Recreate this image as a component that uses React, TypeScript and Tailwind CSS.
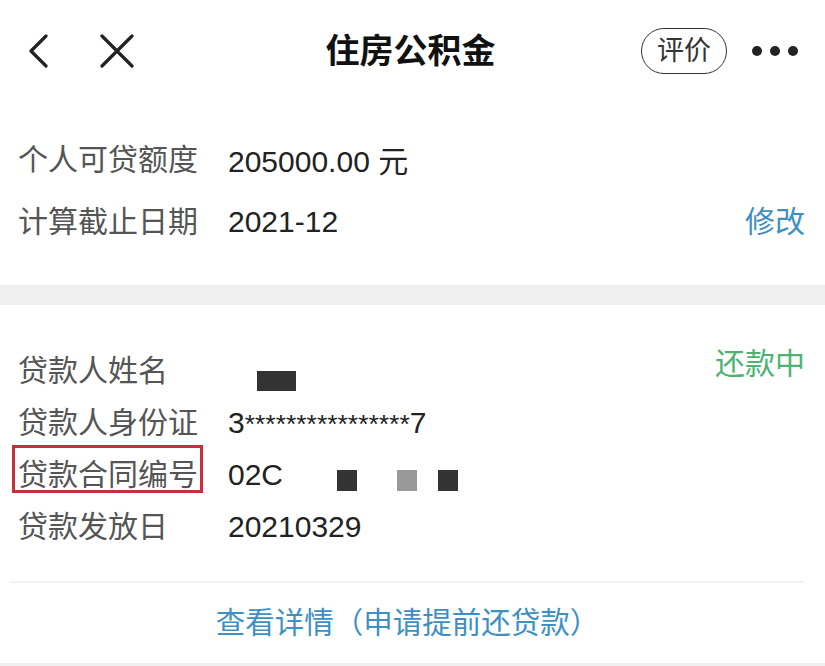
import React from "react";

const font = { fontFamily: '"Liberation Sans", "Noto Sans CJK SC", sans-serif' };

function Row({ label, children, right, labelBox }: { label: string; children?: React.ReactNode; right?: React.ReactNode; labelBox?: boolean }) {
  return (
    <div className="flex h-[52px] items-center pl-[18px] pr-[20px]">
      <div className="relative w-[210px] shrink-0 text-[30px] leading-[36px] text-[#555]">
        {labelBox && (
          <div className="absolute left-[-6px] top-[-12px] h-[48px] w-[191px] border-[3px] border-[#c4303b]" />
        )}
        {label}
      </div>
      <div className="flex flex-1 items-center text-[30px] leading-[36px] text-[#222]">{children}</div>
      {right}
    </div>
  );
}

export default function App() {
  return (
    <div className="flex min-h-[666px] w-[825px] flex-col bg-white" style={font}>
      {/* Header */}
      <div className="relative flex h-[102px] items-center px-[27px]">
        <svg width="22" height="34" viewBox="0 0 22 34" className="shrink-0">
          <path d="M19 2 L4 17 L19 32" fill="none" stroke="#222" strokeWidth="3.2" strokeLinecap="round" strokeLinejoin="round" />
        </svg>
        <svg width="36" height="34" viewBox="0 0 36 34" className="ml-[50px] shrink-0">
          <path d="M3 2 L33 32 M33 2 L3 32" fill="none" stroke="#222" strokeWidth="3.2" strokeLinecap="round" />
        </svg>
        <div className="pointer-events-none absolute left-0 right-0 top-0 flex h-[102px] items-center justify-center">
          <span className="ml-[-4px] text-[34px] font-bold text-[#111]">住房公积金</span>
        </div>
        <div className="ml-auto flex items-center">
          <div className="flex h-[46px] w-[86px] items-center justify-center rounded-full border-[1.5px] border-[#333] text-[27px] text-[#333]">
            评价
          </div>
          <div className="ml-[25px] flex items-center gap-[8px]">
            <span className="h-[10px] w-[10px] rounded-full bg-[#222]" />
            <span className="h-[10px] w-[10px] rounded-full bg-[#222]" />
            <span className="h-[10px] w-[10px] rounded-full bg-[#222]" />
          </div>
        </div>
      </div>

      {/* Section 1 */}
      <div className="pt-[27px] pb-[32px]">
        <div className="flex h-[62px] items-center pl-[18px] pr-[20px]">
          <div className="w-[210px] shrink-0 text-[30px] leading-[36px] text-[#555]">个人可贷额度</div>
          <div className="mt-[4px] text-[30px] leading-[36px] text-[#222]">205000.00 元</div>
        </div>
        <div className="flex h-[62px] items-center pl-[18px] pr-[20px]">
          <div className="w-[210px] shrink-0 text-[30px] leading-[36px] text-[#555]">计算截止日期</div>
          <div className="flex-1 text-[30px] leading-[36px] text-[#222]">2021-12</div>
          <div className="text-[30px] leading-[36px] text-[#3d8fc4]">修改</div>
        </div>
      </div>

      <div className="h-[20px] bg-[#f0f0f0]" />

      {/* Section 2 */}
      <div className="pt-[40px]">
        <Row
          label="贷款人姓名"
          right={<div className="-translate-y-[7px] text-[30px] leading-[36px] text-[#4cb373]">还款中</div>}
        >
          <span className="ml-[29px] mt-[19px] h-[20px] w-[39px] bg-[#333]" />
        </Row>
        <Row label="贷款人身份证">
          <span>
            3<span className="text-[26.5px]">****************</span>7
          </span>
        </Row>
        <Row label="贷款合同编号" labelBox>
          <span className="whitespace-nowrap">02C</span>
          <span className="ml-[54px] mt-[10px] h-[21px] w-[20px] bg-[#333]" />
          <span className="ml-[40px] mt-[10px] h-[21px] w-[20px] bg-[#999]" />
          <span className="ml-[21px] mt-[10px] h-[21px] w-[20px] bg-[#333]" />
        </Row>
        <Row label="贷款发放日">
          <span>20210329</span>
        </Row>
      </div>

      <div className="mt-[28px] ml-[10px] mr-[20px] h-[2px] bg-[#f2f2f2]" />

      <div className="flex h-[80px] items-center justify-center">
        <span className="ml-[-10px] text-[29.5px] text-[#3d8fc4]">查看详情（申请提前还贷款）</span>
      </div>

      <div className="flex-1 bg-[#f0f0f0]" />
    </div>
  );
}
